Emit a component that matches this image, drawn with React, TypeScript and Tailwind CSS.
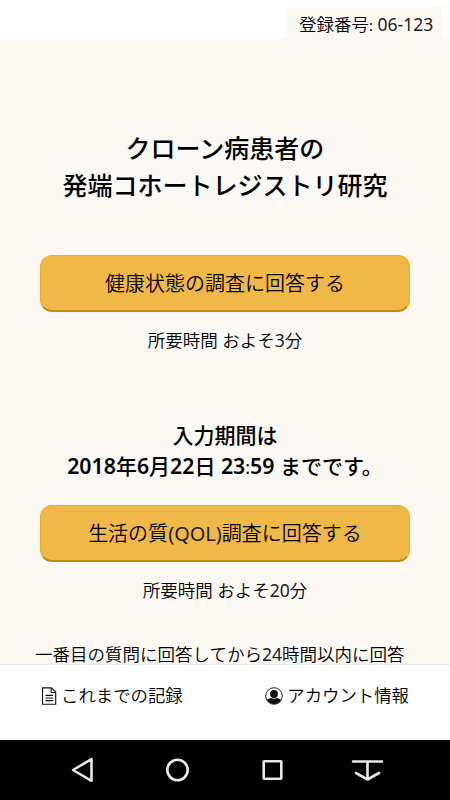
import type { ReactNode } from 'react';

function SurveyButton({ children }: { children: ReactNode }) {
  return (
    <button
      type="button"
      className="block h-[57px] w-full rounded-[12px] border border-b-2 border-[#f0b015] border-b-[#c98607] bg-[#f0b849] pt-px text-[20px] leading-[53px] font-[350] whitespace-nowrap"
    >
      {children}
    </button>
  );
}

function Latin({ children }: { children: ReactNode }) {
  return <span className="font-normal text-[#1a1a1a]">{children}</span>;
}

function Bold({ children }: { children: ReactNode }) {
  return <span className="text-[21.3px] leading-none font-semibold">{children}</span>;
}

// The colon is lower and thinner than the digits around it
function Colon() {
  return <span className="text-[0.85em] leading-none font-normal">:</span>;
}

function RecordIcon() {
  return (
    <svg className="h-[18px] w-[16px]" viewBox="0 0 16 18" fill="none" stroke="#111" strokeWidth="1.1">
      <path d="M1.500 .9h9L14.700 5V17.200H1.500z" />
      <path d="M10.200 1v4.500h4.500M4.500 8.400h7.500M4.500 11h7.500M4.500 13.600h7.500" />
    </svg>
  );
}

function AccountIcon() {
  return (
    <svg className="h-[18px] w-[18px]" viewBox="0 0 18 18">
      <circle cx="9" cy="9" r="8.3" fill="white" stroke="#111" strokeWidth="0.9" />
      <circle cx="9" cy="7" r="3.9" fill="#111" />
      <path d="M1.800 12.900c1-1.200 2.800-1.800 4.500-2 1.700 1.100 3.700 1.100 5.400 0 1.700.2 3.500.8 4.500 2A8.400 8.400 0 0 1 1.800 12.900z" fill="#111" />
    </svg>
  );
}

export default function App() {
  return (
    <div className="flex h-[800px] w-[450px] flex-col overflow-hidden bg-white font-['Noto_Sans','Noto_Sans_CJK_JP',sans-serif] text-[17.5px] font-[350] text-black">
      <header className="flex h-[39px] shrink-0 justify-end pt-[6px] pr-[8px]">
        <div className="w-[155px] bg-[#fcf9f5] pl-[12px] leading-[36px] whitespace-nowrap">
          登録番号
          <Colon /> <Latin>06-123</Latin>
        </div>
      </header>

      <main className="min-h-0 flex-1 overflow-hidden bg-[#fcf9f5] px-[40px] text-center">
        <h1 className="mt-[91px] text-[25px] leading-[37px] font-medium whitespace-nowrap">
          クローン病患者の
          <br />
          発端コホートレジストリ研究
        </h1>
        <div className="mt-[51px]">
          <SurveyButton>健康状態の調査に回答する</SurveyButton>
          <p className="mt-[15px] leading-[26px]">
            所要時間 およそ<Latin>3</Latin>分
          </p>
        </div>
        <h2 className="mt-[66.5px] text-[21px] leading-[31.5px] font-medium whitespace-nowrap">
          入力期間は
          <br />
          <Bold>2018</Bold>年<Bold>6</Bold>月<Bold>22</Bold>日 <Bold>23</Bold>
          <Colon />
          <Bold>59</Bold> までです。
        </h2>
        <div className="mt-[22.5px]">
          <SurveyButton>
            生活の質<Latin>(QOL)</Latin>調査に回答する
          </SurveyButton>
          <p className="mt-[15px] leading-[26px]">
            所要時間 およそ<Latin>20</Latin>分
          </p>
        </div>
        <p className="mt-[38px] -ml-[5px] text-left leading-[26px] whitespace-nowrap">
          一番目の質問に回答してから<Latin>24</Latin>時間以内に回答
        </p>
      </main>

      <footer className="flex h-[76px] shrink-0 justify-between border-t border-[#e8e8e8] bg-white pr-[41px] pl-[41px] text-[17.4px]">
        <a className="flex h-[61px] items-center gap-[4px] whitespace-nowrap">
          <RecordIcon />
          これまでの記録
        </a>
        <a className="flex h-[61px] items-center gap-[4px] whitespace-nowrap">
          <AccountIcon />
          アカウント情報
        </a>
      </footer>

      <nav className="h-[60px] shrink-0 bg-black">
        <svg
          className="h-[60px] w-[450px]"
          viewBox="0 0 450 60"
          fill="none"
          stroke="#e8e8e8"
          strokeWidth="2.6"
          strokeLinejoin="round"
          strokeLinecap="round"
        >
          <path d="M91.500 19.200v21.600L73 30z" />
          <circle cx="177.500" cy="30" r="10.200" />
          <rect x="263.700" y="21.200" width="17.600" height="17.600" rx="0.500" />
          <path d="M353 21.500h29M367.500 21.500v17.500M356 33l11.500 6.500L379 33" />
        </svg>
      </nav>
    </div>
  );
}
